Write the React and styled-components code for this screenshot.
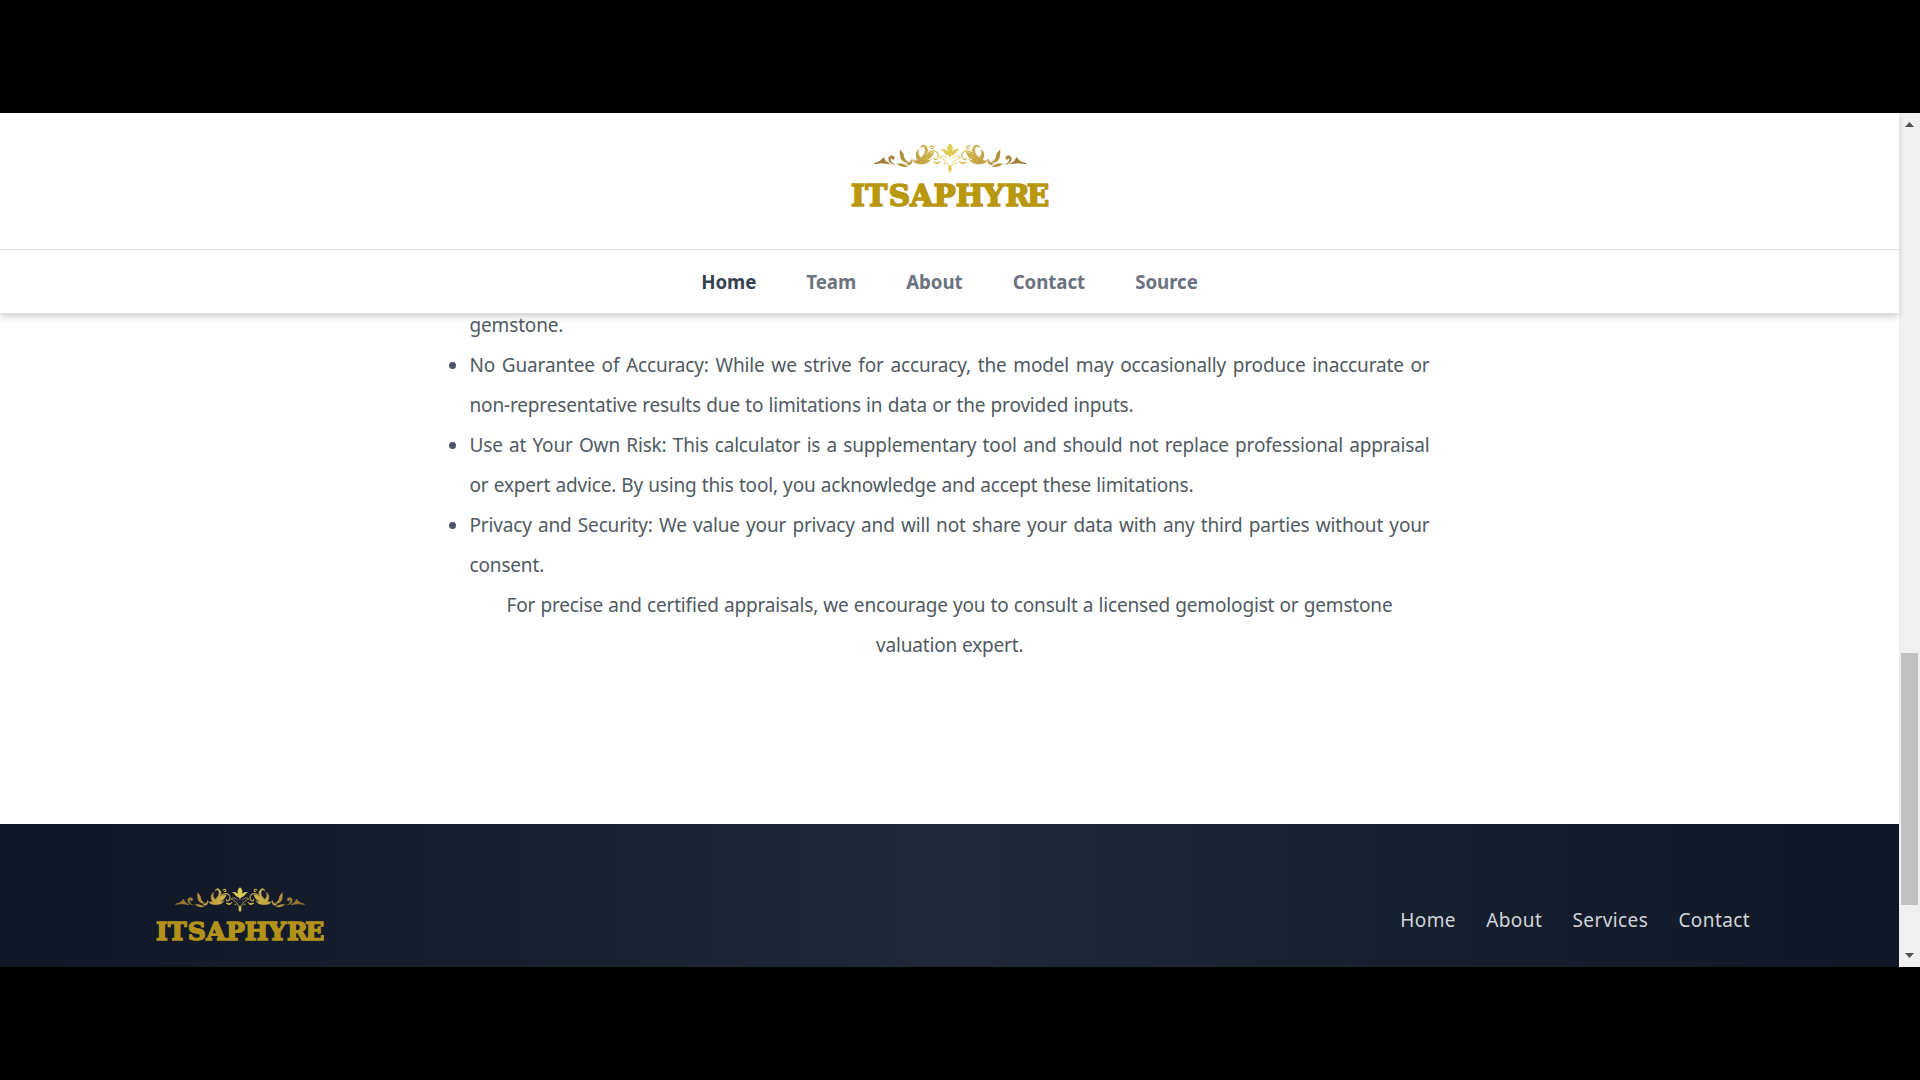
import React from "react";
import styled, { createGlobalStyle } from "styled-components";

const Global = createGlobalStyle`
  * { box-sizing: border-box; }
  html, body { margin: 0; padding: 0; background: #000; overflow: hidden; }
`;

const Stage = styled.div`
  width: 1920px;
  height: 1080px;
  padding: 113px 0;
  background: #000;
  font-family: "Noto Sans", "Open Sans", sans-serif;
`;

const Viewport = styled.div`
  display: flex;
  height: 854px;
  background: #fff;
  overflow: hidden;
`;

const Page = styled.div`
  width: 1899px;
  display: flex;
  flex-direction: column;
`;

const Header = styled.header`
  height: 200px;
  flex: none;
  position: relative;
  z-index: 1;
  background: #fff;
  box-shadow: 0 4px 6px rgba(0, 0, 0, 0.17);
`;

const Brand = styled.div`
  height: 137px;
  padding-top: 29px;
  display: flex;
  justify-content: center;
  border-bottom: 1px solid #e0e2e4;
`;

const Nav = styled.nav`
  height: 63px;
  padding-top: 1px;
  display: flex;
  justify-content: center;
  align-items: center;
  gap: 50px;
`;

const NavLink = styled.a`
  font-size: 18.7px;
  font-weight: 700;
  line-height: 28px;
  letter-spacing: -0.05px;
  color: ${(p) => (p.$active ? "#374151" : "#6b7280")};
`;

const Main = styled.main`
  height: 511px;
  flex: none;
  padding-left: 469.5px;
`;

const List = styled.ul`
  margin: 0;
  padding: 0;
  list-style: none;
`;

const Item = styled.li`
  position: relative;
  &::before {
    content: "";
    display: ${(p) => (p.$continued ? "none" : "block")};
    position: absolute;
    left: -21px;
    top: 9px;
    width: 7px;
    height: 7px;
    border-radius: 50%;
    background: #4b5563;
  }
`;

const Line = styled.span`
  display: block;
  width: ${(p) => p.$width}px;
  margin-left: ${(p) => p.$indent || 0}px;
  height: 40px;
  font-size: 19px;
  line-height: 24px;
  letter-spacing: -0.16px;
  white-space: nowrap;
  text-align: justify;
  text-align-last: justify;
  color: #505a63;
`;

const Note = styled.p`
  margin: 0;
`;

const Footer = styled.footer`
  height: 143px;
  flex: none;
  padding: 62px 149px 0 155px;
  display: flex;
  justify-content: space-between;
  background: linear-gradient(to right, #0f1626, #1f2937 50%, #0f1626);
`;

const FooterNav = styled.nav`
  display: flex;
  gap: 30.3px;
  padding-top: 20px;
`;

const FooterLink = styled.a`
  font-size: 19px;
  line-height: 28px;
  letter-spacing: 0.4px;
  color: #d1d5db;
`;

const Scrollbar = styled.div`
  width: 21px;
  height: 854px;
  padding: 9px 0;
  display: flex;
  flex-direction: column;
  align-items: center;
  background: #f0f0f0;
`;

const Arrow = styled.svg`
  width: 9px;
  height: 5px;
  flex: none;
  fill: #505050;
`;

const Track = styled.div`
  flex: 1;
  width: 17px;
  padding-top: 526px;
`;

const Thumb = styled.div`
  height: 252px;
  background: #c1c1c1;
`;

const LogoSvg = styled.svg`
  display: block;
  width: ${(p) => p.$width}px;
  height: ${(p) => (p.$width * 66) / 200}px;
  overflow: visible;
`;

function Half({ fill }) {
  return (
    <g fill={fill} stroke={fill} strokeWidth="0.3" strokeLinecap="round">
      <path d="M24.500 21.500 Q31 20 33.500 15.500 Q34 19.500 39.500 21.800 Q32 20 24.500 21.500Z" strokeWidth="0.900" />
      <path d="M38.500 16 Q40 12.500 43.500 14 Q46 16.500 42.500 18 Q43 15.500 40.500 16.500 Q40.500 21 45 22.500 Q38.500 22 38.500 16Z" />
      <path d="M50 8 Q54 11 54 15 Q55 19 59.500 20.500 Q52 21 50.500 15.500 Q49.500 12 50 8Z" />
      <path d="M47 22 Q52 20 58 24.500 Q52 26 47 22Z" />
      <path d="M56 21 Q60 22 62 17 Q63.500 21 59.500 23 Q57 23.500 56 21Z" />
      <path d="M62 18 Q65 20 70 16.500 Q76 11 84 10 Q82.500 16 77 18 Q80 18.500 81.500 17 Q78 23 70 22 Q65 22 62 18Z" />
      <path d="M67.500 18 Q63.500 12 69 7 Q67 13 71 15.500 Q70 17.500 67.500 18Z" />
      <path d="M72 14.500 Q76 11 75 6.500 Q73.500 3 70.500 6 Q71 1.800 75 3.300 Q80 7 76.500 12 Q75 14.500 72 14.500Z" />
      <g fill="none" strokeWidth="1.200">
        <path d="M78 11 Q82 7.500 86 9.500 Q90 13 87 17 Q84 18.500 84 16 M84 20 Q88 23 90.500 19.500 M80 5 Q82 2.500 83.500 5 Q83.500 7 81.500 6.500" />
        <path d="M97 16 Q91 12 89.500 15.500 Q96 17 98.500 24" strokeWidth="0.800" />
      </g>
      <circle cx="87.500" cy="21" r="1" />
      <circle cx="94.500" cy="21.500" r="0.700" />
    </g>
  );
}

function Logo({ width, id, ink }) {
  const fill = `url(#${id})`;
  return (
    <LogoSvg $width={width} viewBox="0 0 200 66">
      <defs>
        <linearGradient id={id} gradientUnits="userSpaceOnUse" x1="24" x2="100" y1="0" y2="0">
          <stop offset="0" stopColor="#94702e" />
          <stop offset="0.500" stopColor="#bb9a40" />
          <stop offset="1" stopColor="#e2cc52" />
        </linearGradient>
      </defs>
      <Half fill={fill} />
      <g transform="translate(200 0) scale(-1 1)"><Half fill={fill} /></g>
      <g fill="#decb50">
        <path d="M100 1.500 Q104.500 5 102 9.500 Q106 5.500 109.500 8 Q107 8 105.500 11 Q104 13.500 101 13.500 L100 17 L99 13.500 Q96 13.500 94.500 11 Q93 8 90.500 8 Q94 5.500 98 9.500 Q95.500 5 100 1.500Z" />
        <path d="M100 22.500 Q103.300 27 100 31 Q96.700 27 100 22.500Z" />
      </g>
      <text
        x="8 26.3 49.3 71.6 94.6 119.6 143.8 167.6 188"
        y="63.600"
        textAnchor="middle"
        fontFamily="'DejaVu Serif', serif"
        fontWeight="700"
        fontSize="29.500"
        fill={ink}
        stroke={ink}
        strokeWidth="1.700"
      >
        ITSAPHYRE
      </text>
    </LogoSvg>
  );
}

export default function App() {
  return (
    <Stage>
      <Global />
      <Viewport>
        <Page>
          <Header>
            <Brand><Logo width={200} id="goldHeader" ink="#b9970f" /></Brand>
            <Nav>
              <NavLink $active>Home</NavLink>
              <NavLink>Team</NavLink>
              <NavLink>About</NavLink>
              <NavLink>Contact</NavLink>
              <NavLink>Source</NavLink>
            </Nav>
          </Header>
          <Main>
            <List>
              <Item $continued><Line $width={92}>gemstone.</Line></Item>
              <Item>
                <Line $width={960}>No Guarantee of Accuracy: While we strive for accuracy, the model may occasionally produce inaccurate or</Line>
                <Line $width={664}>non-representative results due to limitations in data or the provided inputs.</Line>
              </Item>
              <Item>
                <Line $width={960}>Use at Your Own Risk: This calculator is a supplementary tool and should not replace professional appraisal</Line>
                <Line $width={724}>or expert advice. By using this tool, you acknowledge and accept these limitations.</Line>
              </Item>
              <Item>
                <Line $width={960}>Privacy and Security: We value your privacy and will not share your data with any third parties without your</Line>
                <Line $width={74}>consent.</Line>
              </Item>
            </List>
            <Note>
              <Line $width={886} $indent={37}>For precise and certified appraisals, we encourage you to consult a licensed gemologist or gemstone</Line>
              <Line $width={146.5} $indent={406.5}>valuation expert.</Line>
            </Note>
          </Main>
          <Footer>
            <Logo width={170} id="goldFooter" ink="#b3921a" />
            <FooterNav>
              <FooterLink>Home</FooterLink>
              <FooterLink>About</FooterLink>
              <FooterLink>Services</FooterLink>
              <FooterLink>Contact</FooterLink>
            </FooterNav>
          </Footer>
        </Page>
        <Scrollbar>
          <Arrow viewBox="0 0 9 5"><path d="M0 5 L4.500 0 L9 5Z" /></Arrow>
          <Track><Thumb /></Track>
          <Arrow viewBox="0 0 9 5"><path d="M0 0 L4.500 5 L9 0Z" /></Arrow>
        </Scrollbar>
      </Viewport>
    </Stage>
  );
}
